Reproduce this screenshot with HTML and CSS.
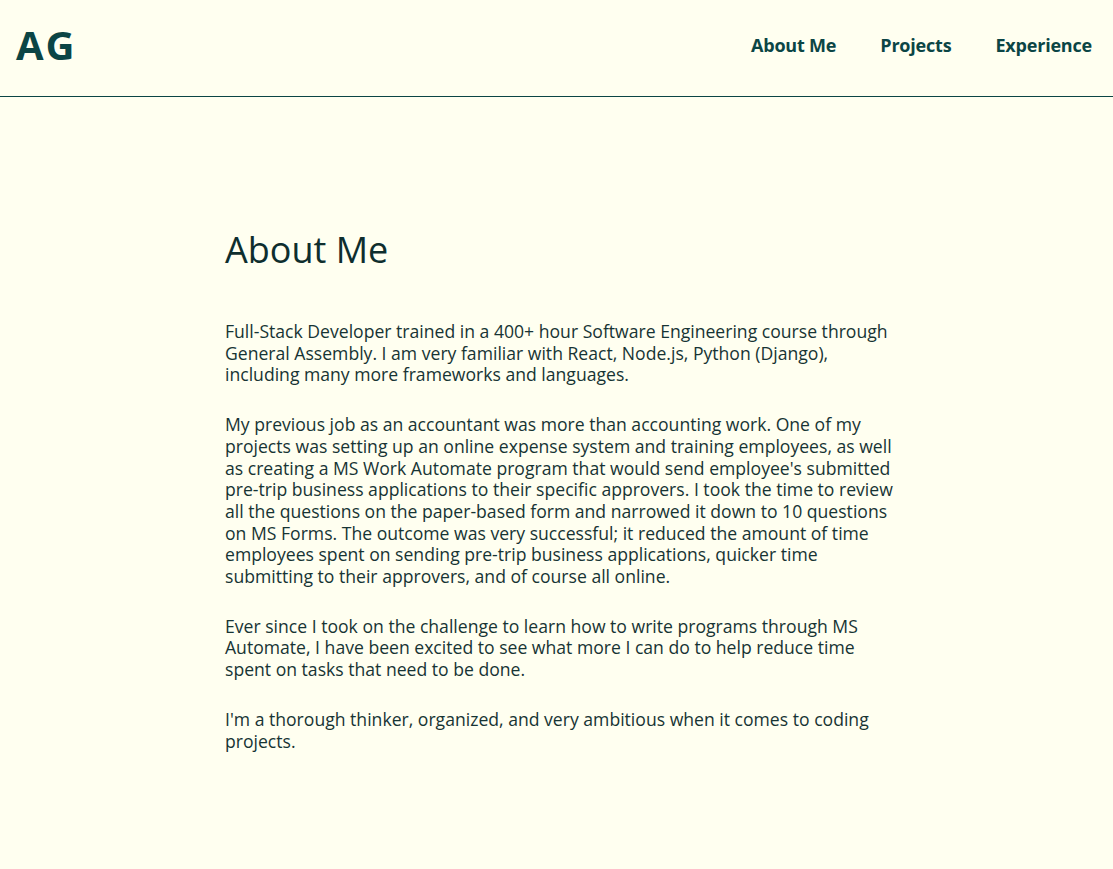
FILE: index.html
```html
<!DOCTYPE html>
<html lang="en">
<head>
<meta charset="utf-8">
<title>AG - About Me</title>
<link rel="stylesheet" href="styles.css">
</head>
<body>
<header class="site-header">
  <div class="logo">AG</div>
  <nav class="nav">
    <a href="#about">About Me</a>
    <a href="#projects">Projects</a>
    <a href="#experience">Experience</a>
  </nav>
</header>
<main class="about" id="about">
  <h1 class="about-title">About Me</h1>
  <p>Full-Stack Developer trained in a 400+ hour Software Engineering course through General Assembly. I am very familiar with React, Node.js, Python (Django), including many more frameworks and languages.</p>
  <p>My previous job as an accountant was more than accounting work. One of my projects was setting up an online expense system and training employees, as well as creating a MS Work Automate program that would send employee's submitted pre-trip business applications to their specific approvers. I took the time to review all the questions on the paper-based form and narrowed it down to 10 questions on MS Forms. The outcome was very successful; it reduced the amount of time employees spent on sending pre-trip business applications, quicker time submitting to their approvers, and of course all online.</p>
  <p>Ever since I took on the challenge to learn how to write programs through MS Automate, I have been excited to see what more I can do to help reduce time spent on tasks that need to be done.</p>
  <p>I'm a thorough thinker, organized, and very ambitious when it comes to coding projects.</p>
</main>
</body>
</html>
```
FILE: styles.css
```css
html, body {
  margin: 0;
  padding: 0;
}
body {
  background: #fffff0;
  font-family: "Open Sans", "Noto Sans", sans-serif;
  color: #173434;
}
.site-header {
  box-sizing: border-box;
  display: flex;
  justify-content: space-between;
  align-items: center;
  height: 97px;
  padding: 0 21px 7px 16px;
  border-bottom: 1px solid #0b4545;
}
.logo {
  font-size: 40px;
  font-weight: 700;
  color: #0b4545;
  letter-spacing: 2px;
}
.nav {
  display: flex;
  gap: 44px;
}
.nav a {
  color: #0b4545;
  text-decoration: none;
  font-weight: 700;
  font-size: 18px;
  letter-spacing: -0.2px;
}
.about {
  width: 672px;
  margin: 0 0 0 225px;
  padding-top: 129px;
  padding-bottom: 60px;
}
.about-title {
  margin: 0 0 47px;
  font-size: 36px;
  line-height: 48px;
  font-weight: 400;
  color: #0e2e2e;
}
.about p {
  margin: 0 0 28px;
  font-size: 17.6px;
  line-height: 21.7px;
}
```
